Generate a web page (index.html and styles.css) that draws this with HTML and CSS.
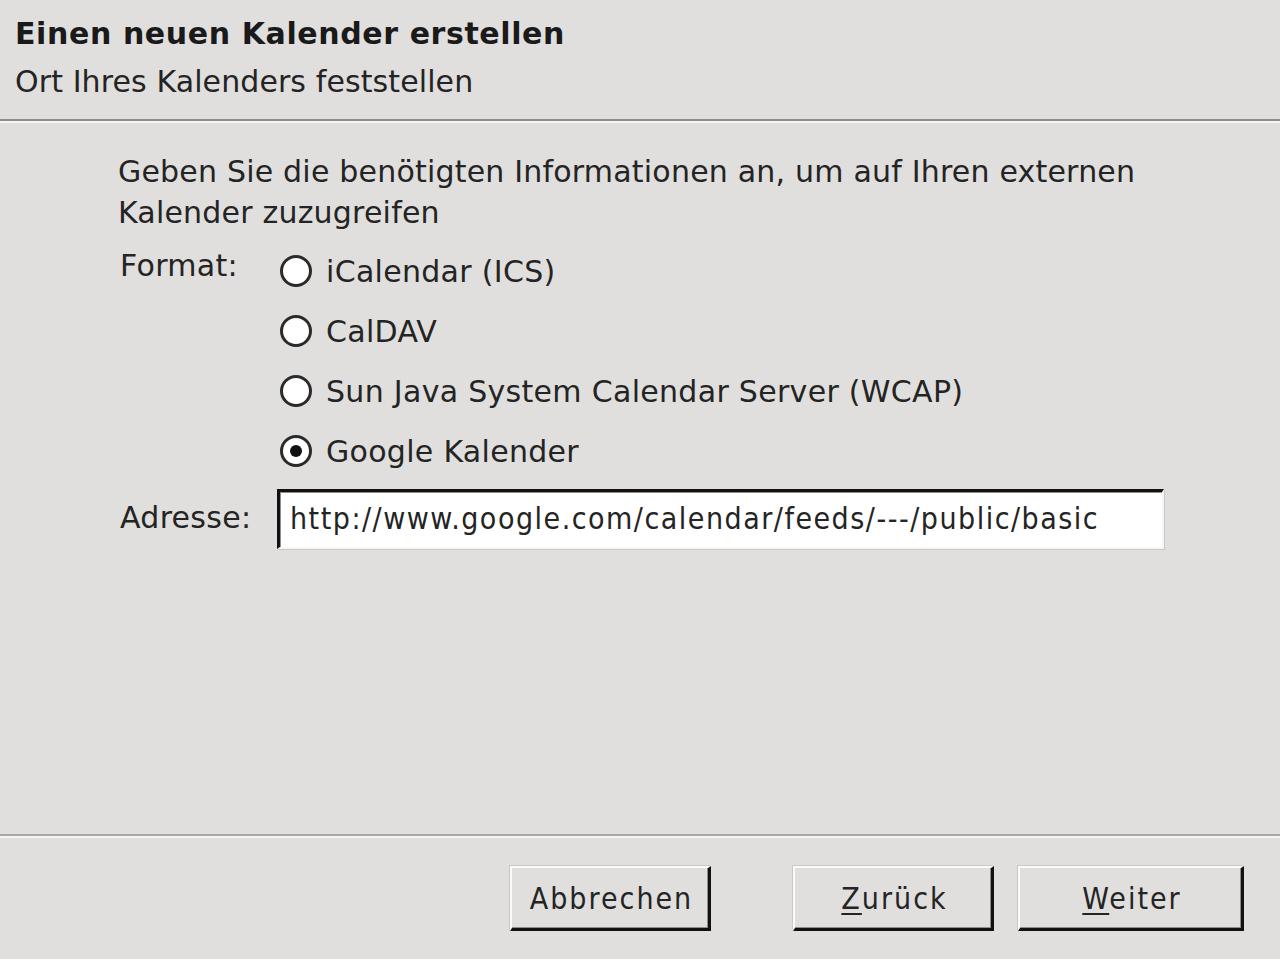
FILE: index.html
```html
<!DOCTYPE html>
<html lang="de">
<head>
    <meta charset="utf-8">
    <title>Einen neuen Kalender erstellen</title>
    <link rel="stylesheet" href="styles.css">
</head>
<body>
    <div class="wizard">
        <!-- Kopfbereich des Assistenten -->
        <div class="wizard-header">
            <div class="wizard-title">Einen neuen Kalender erstellen</div>
            <div class="wizard-subtitle">Ort Ihres Kalenders feststellen</div>
        </div>

        <div class="wizard-page">
            <p class="intro">Geben Sie die benötigten Informationen an, um auf Ihren externen Kalender zuzugreifen</p>
            <div class="form-grid">
                <div class="form-label format-label">Format:</div>
                <div class="radio-group">
                    <label class="radio"><span class="radio-dot"></span>iCalendar (ICS)</label>
                    <label class="radio"><span class="radio-dot"></span>CalDAV</label>
                    <label class="radio"><span class="radio-dot"></span>Sun Java System Calendar Server (WCAP)</label>
                    <label class="radio checked"><span class="radio-dot"></span>Google Kalender</label>
                </div>
                <div class="form-label address-label">Adresse:</div>
                <div class="text-field">http://www.google.com/calendar/feeds/---/public/basic</div>
            </div>
        </div>

        <div class="wizard-buttons">
            <button class="btn">Abbrechen</button>
            <button class="btn btn-back"><u>Z</u>urück</button>
            <button class="btn btn-next"><u>W</u>eiter</button>
        </div>
    </div>
</body>
</html>
```

FILE: styles.css
```css
body {
    margin: 0;
    padding: 0;
    background-color: #e0dfdd;
    font-family: "DejaVu Sans", Verdana, sans-serif;
    color: #242424;
}

.wizard {
    height: 959px;
    display: flex;
    flex-direction: column;
}

.wizard-header {
    padding: 14px 15px 0;
    height: 105px;
    border-bottom: 2px solid #8e8d8b;
    box-shadow: 0 2px 0 #f4f4f3;
}

.wizard-title {
    font-size: 30px;
    font-weight: bold;
    letter-spacing: 0.6px;
    line-height: 40px;
    color: #1a1a1a;
}

.wizard-subtitle {
    font-size: 30px;
    letter-spacing: 0.1px;
    line-height: 40px;
    margin-top: 8px;
}

.wizard-page {
    flex: 1;
    padding: 30px 0 0 118px;
    border-bottom: 2px solid #a9a8a6;
    box-shadow: 0 2px 0 #f4f4f3;
}

.intro {
    margin: 0;
    width: 1060px;
    font-size: 30px;
    letter-spacing: 0.2px;
    line-height: 41px;
}

.form-grid {
    display: grid;
    grid-template-columns: 159px 887px;
    margin-top: 8px;
    font-size: 30px;
    letter-spacing: 0.3px;
}

.form-label {
    padding-left: 2px;
    line-height: 40px;
}

.format-label {
    padding-top: 5px;
}

.radio-group {
    display: flex;
    flex-direction: column;
}

.radio {
    display: flex;
    align-items: center;
    height: 60px;
}

.radio-dot {
    width: 26px;
    height: 26px;
    border: 3px solid #2a2a2a;
    border-radius: 50%;
    background-color: #fff;
    margin: 0 14px 0 3px;
    flex-shrink: 0;
    position: relative;
}

.radio.checked .radio-dot::after {
    content: "";
    position: absolute;
    top: 7px;
    left: 7px;
    width: 12px;
    height: 12px;
    border-radius: 50%;
    background-color: #111;
}

.address-label {
    align-self: center;
    margin-top: 5px;
}

.text-field {
    box-sizing: border-box;
    height: 60px;
    margin-top: 8px;
    border-style: solid;
    border-width: 3px 2px 2px 3px;
    border-color: #111 #f6f6f6 #f6f6f6 #111;
    box-shadow: inset 1px 1px 0 #8e8d8b, 1px 1px 0 #c9c8c6;
    background-color: #fff;
    padding: 0 10px;
    font-family: "DejaVu Sans Condensed", "DejaVu Sans", sans-serif;
    font-stretch: condensed;
    font-size: 30px;
    letter-spacing: 1.5px;
    line-height: 54px;
    white-space: nowrap;
}

.wizard-buttons {
    height: 123px;
    display: flex;
    align-items: flex-start;
    padding: 30px 36px 0 0;
    box-sizing: border-box;
    justify-content: flex-end;
}

.btn {
    width: 201px;
    height: 65px;
    box-sizing: border-box;
    background-color: #e0dfdd;
    border-style: solid;
    border-width: 2px 3px 3px 2px;
    border-color: #fbfbfb #111 #111 #fbfbfb;
    box-shadow: inset -1px -1px 0 #8e8d8b, -1px -1px 0 #c9c8c6;
    font-family: "DejaVu Sans Condensed", "DejaVu Sans", sans-serif;
    font-stretch: condensed;
    font-size: 30px;
    letter-spacing: 2px;
    color: #242424;
    padding: 0 0 0 3px;
    cursor: pointer;
}

.btn-back {
    margin-left: 82px;
}

.btn-next {
    width: 226px;
    margin-left: 24px;
}

.btn u {
    text-decoration-thickness: 2px;
    text-underline-offset: 4px;
}
```
